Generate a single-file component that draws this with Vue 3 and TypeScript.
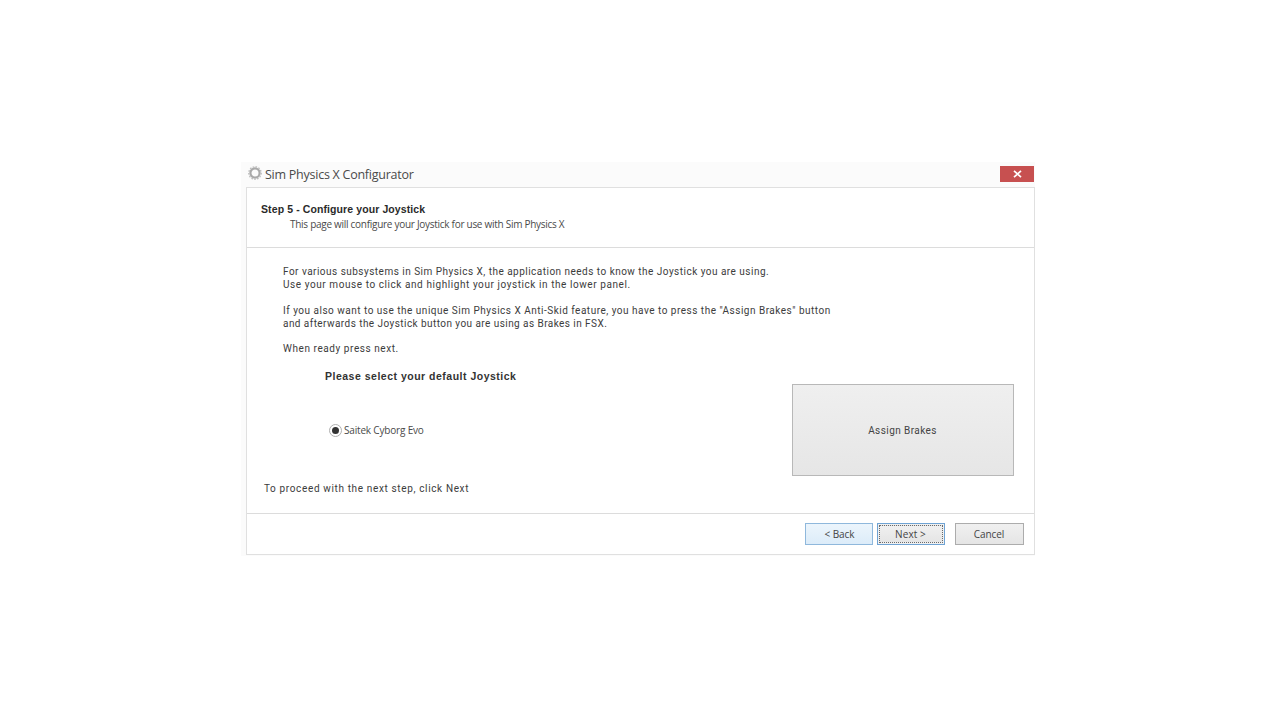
<script setup lang="ts">
interface Line { text: string; fit?: string }
const paragraphs: Line[][] = [
  [
    { text: 'For various subsystems in Sim Physics X, the application needs to know the Joystick you are using.', fit: 'tight-1' },
    { text: 'Use your mouse to click and highlight your joystick in the lower panel.', fit: 'loose' },
  ],
  [
    { text: 'If you also want to use the unique Sim Physics X Anti-Skid feature, you have to press the "Assign Brakes" button' },
    { text: 'and afterwards the Joystick button you are using as Brakes in FSX.', fit: 'tight-2' },
  ],
  [{ text: 'When ready press next.', fit: 'loose' }],
]
</script>

<template>
  <div class="page">
    <div class="window">
      <div class="titlebar">
        <div class="title">
          <svg class="gear" width="14" height="14" viewBox="0 0 14 14" aria-hidden="true">
            <circle cx="7" cy="7" r="4.6" fill="none" stroke="#a9a9a9" stroke-width="2.2" />
            <circle cx="7" cy="7" r="6.2" fill="none" stroke="#bdbdbd" stroke-width="1.4" stroke-dasharray="1.6 1.3" />
          </svg>
          <span class="title-text">Sim Physics X Configurator</span>
        </div>
        <button class="close" aria-label="Close">
          <svg width="9" height="8" viewBox="0 0 9 8"><path d="M1 .8 8 7.2M8 .8 1 7.2" stroke="#fff" stroke-width="1.7" fill="none" /></svg>
        </button>
      </div>
      <div class="panel">
        <header class="head">
          <h1>Step 5 - Configure your Joystick</h1>
          <p>This page will configure your Joystick for use with Sim Physics X</p>
        </header>
        <main class="body">
          <div class="intro">
            <p v-for="(para, i) in paragraphs" :key="i">
              <span v-for="line in para" :key="line.text" class="line" :class="line.fit">{{ line.text }}</span>
            </p>
          </div>
          <div class="select-row">
            <div class="select-col">
              <h2>Please select your default Joystick</h2>
              <label class="radio-row">
                <span class="radio"><span class="dot"></span></span>
                <span>Saitek Cyborg Evo</span>
              </label>
            </div>
            <button class="assign">Assign Brakes</button>
          </div>
          <p class="proceed">To proceed with the next step, click Next</p>
        </main>
        <footer class="foot">
          <button class="btn back">&lt; Back</button>
          <button class="btn next"><span>Next &gt;</span></button>
          <button class="btn cancel">Cancel</button>
        </footer>
      </div>
    </div>
  </div>
</template>

<style>
html, body { background: #fff; }
</style>

<style scoped>
.page {
  width: 1280px;
  height: 720px;
  padding: 162px 0 0 241px;
  box-sizing: border-box;
  font-family: "Roboto", "Liberation Sans", sans-serif;
  color: #3c3c3c;
  background: #fff;
}
.window {
  width: 794px;
  height: 394px;
  padding: 0 0 1px 5px;
  box-sizing: border-box;
  background: #fbfbfb;
  display: flex;
  flex-direction: column;
}
.titlebar {
  height: 25px;
  display: flex;
  justify-content: space-between;
  align-items: flex-start;
}
.title {
  display: flex;
  align-items: center;
  gap: 3px;
  height: 24px;
  font: 12.5px/24px "Open Sans", sans-serif;
  letter-spacing: -0.25px;
  color: #4a4a4a;
  margin-left: 2px;
}
.title-text { padding-top: 1px; }
.gear { flex: none; margin-top: -2px; }
.close {
  width: 34px;
  height: 16px;
  margin: 4px 1px 0 0;
  border: 0;
  padding: 0;
  background: #c75050;
  display: flex;
  align-items: center;
  justify-content: center;
}
.panel {
  flex: 1;
  width: 789px;
  box-sizing: border-box;
  border: 1px solid #e0e0e0;
  background: #fff;
  display: flex;
  flex-direction: column;
}
.head {
  height: 60px;
  box-sizing: border-box;
  border-bottom: 1px solid #dcdcdc;
  padding: 14px 0 0 14px;
}
.head h1 {
  margin: 0;
  font: 700 10.5px/14px "Liberation Sans", sans-serif;
  letter-spacing: 0.1px;
  color: #2a2a2a;
}
.head p {
  margin: 1px 0 0 29px;
  font: 10px/14px "Open Sans", sans-serif;
  letter-spacing: -0.28px;
  color: #4a4a4a;
}
.body {
  flex: 1;
  padding: 17px 20px 0 17px;
  font-size: 10px;
  letter-spacing: 0.5px;
  line-height: 13px;
}
.intro { margin-left: 19px; }
.intro p { margin: 0 0 12.5px; }
.line { display: block; white-space: nowrap; }
.tight-1 { letter-spacing: 0.48px; }
.tight-2 { letter-spacing: 0.44px; }
.loose { letter-spacing: 0.57px; }
.select-row {
  display: flex;
  justify-content: space-between;
}
.select-col { margin: 2px 0 0 61px; }
.select-col h2 {
  margin: 0;
  font: 700 10.5px/13px "Liberation Sans", sans-serif;
  letter-spacing: 0.5px;
  color: #333;
}
.radio-row {
  display: flex;
  align-items: center;
  gap: 2px;
  margin: 41px 0 0 4px;
  font: 10px/13px "Open Sans", sans-serif;
  letter-spacing: -0.18px;
  color: #4a4a4a;
}
.radio {
  width: 11px;
  height: 11px;
  border: 1px solid #b0b0b0;
  border-radius: 50%;
  display: flex;
  align-items: center;
  justify-content: center;
}
.dot {
  width: 7px;
  height: 7px;
  background: #333;
  border-radius: 50%;
}
.assign {
  width: 222px;
  height: 92px;
  margin-top: 16px;
  border: 1px solid #b8b8b8;
  background: linear-gradient(#efefef, #e6e6e6);
  font: 10px "Roboto", sans-serif;
  letter-spacing: 0.42px;
  color: #444;
  padding: 1px 1px 0 0;
}
.proceed {
  margin: 6px 0 0;
  letter-spacing: 0.64px;
}
.foot {
  height: 41px;
  box-sizing: border-box;
  border-top: 1px solid #dcdcdc;
  display: flex;
  padding: 9px 10px 0 0;
  justify-content: flex-end;
}
.btn {
  width: 69px;
  height: 22px;
  box-sizing: border-box;
  font: 10px "Open Sans", sans-serif;
  letter-spacing: -0.1px;
  color: #444;
  padding: 0;
  border: 1px solid #acacac;
  background: linear-gradient(#f0f0f0, #e5e5e5);
}
.back {
  width: 68px;
  padding-left: 1px;
  border-color: #8fb8dc;
  background: linear-gradient(#ecf5fc, #dcecf9);
}
.next {
  width: 68px;
  margin-left: 4px;
  border-color: #6fa3d4;
  padding: 1px;
  background: #f0f0f0;
  letter-spacing: 0.1px;
}
.next span {
  display: flex;
  align-items: center;
  justify-content: center;
  height: 100%;
  padding-right: 1px;
  border: 1px dotted #6a6a6a;
  box-sizing: border-box;
  background: linear-gradient(#f0f0f0, #e5e5e5);
}
.cancel { margin-left: 10px; padding-right: 1px; }
</style>
